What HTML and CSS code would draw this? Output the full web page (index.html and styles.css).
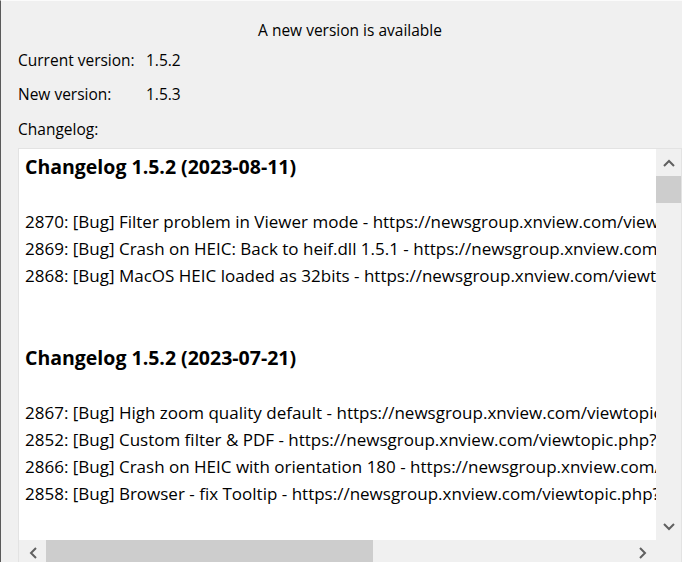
FILE: index.html
```html
<!DOCTYPE html>
<html>
<head>
<meta charset="utf-8">
<link rel="stylesheet" href="styles.css">
</head>
<body>
<div class="frame">
  <div class="dialog">
    <div class="title">A new version is available</div>
    <div class="row row1"><span class="label">Current version:</span><span class="value">1.5.2</span></div>
    <div class="row row2"><span class="label">New version:</span><span class="value">1.5.3</span></div>
    <div class="row row3"><span class="label">Changelog:</span></div>
    <div class="box">
      <div class="viewport">
        <div class="content">
          <div class="heading">Changelog 1.5.2 (2023-08-11)</div>
          <div class="line"></div>
          <div class="line">2870: [Bug] Filter problem in Viewer mode - https://newsgroup.xnview.com/viewtopic.php?t=47012</div>
          <div class="line">2869: [Bug] Crash on HEIC: Back to heif.dll 1.5.1 - https://newsgroup.xnview.com/viewtopic.php?t=47010</div>
          <div class="line">2868: [Bug] MacOS HEIC loaded as 32bits - https://newsgroup.xnview.com/viewtopic.php?t=46999</div>
          <div class="line"></div>
          <div class="line"></div>
          <div class="heading">Changelog 1.5.2 (2023-07-21)</div>
          <div class="line"></div>
          <div class="line">2867: [Bug] High zoom quality default - https://newsgroup.xnview.com/viewtopic.php?t=46962</div>
          <div class="line">2852: [Bug] Custom filter &amp; PDF - https://newsgroup.xnview.com/viewtopic.php?t=46880</div>
          <div class="line">2866: [Bug] Crash on HEIC with orientation 180 - https://newsgroup.xnview.com/viewtopic.php?t=46955</div>
          <div class="line">2858: [Bug] Browser - fix Tooltip - https://newsgroup.xnview.com/viewtopic.php?t=46921</div>
        </div>
      </div>
      <div class="vscroll">
        <div class="sbtn vbtn-up">
          <svg width="12" height="8" viewBox="0 0 12 8"><polyline points="1,7 6,2 11,7" fill="none" stroke="#606060" stroke-width="2"/></svg>
        </div>
        <div class="vtrack"><div class="vthumb"></div></div>
        <div class="sbtn vbtn-down">
          <svg width="12" height="8" viewBox="0 0 12 8"><polyline points="1,1 6,6 11,1" fill="none" stroke="#606060" stroke-width="2"/></svg>
        </div>
      </div>
      <div class="hscroll">
        <div class="sbtn hbtn">
          <svg width="8" height="12" viewBox="0 0 8 12"><polyline points="7,1 2,6 7,11" fill="none" stroke="#606060" stroke-width="2"/></svg>
        </div>
        <div class="htrack"><div class="hthumb"></div></div>
        <div class="sbtn hbtn">
          <svg width="8" height="12" viewBox="0 0 8 12"><polyline points="1,1 6,6 1,11" fill="none" stroke="#606060" stroke-width="2"/></svg>
        </div>
      </div>
      <div class="corner"></div>
    </div>
  </div>
</div>
</body>
</html>
```
FILE: styles.css
```css
html, body {
  margin: 0;
  padding: 0;
  width: 682px;
  height: 562px;
  overflow: hidden;
  background: #f0f0f0;
}
.frame {
  width: 700px;
  height: 562px;
  border-left: 1px solid #5a5a5a;
  border-top: 1px solid #fbfbfb;
  box-sizing: border-box;
  background: #f0f0f0;
  font-family: "Open Sans", "Noto Sans", sans-serif;
  font-size: 15.5px;
  color: #000;
}
.dialog {
  display: flex;
  flex-direction: column;
  padding: 19px 18px 0 17px;
}
.title {
  line-height: 20px;
  height: 20px;
  text-align: center;
}
.row {
  display: flex;
  line-height: 20px;
  height: 20px;
}
.row1 { margin-top: 10px; }
.row2 { margin-top: 14px; }
.row3 { margin-top: 15px; }
.label { width: 128px; }
.box {
  margin-top: 9px;
  height: 418px;
  box-sizing: border-box;
  border: 1px solid #e3e3e3;
  display: grid;
  grid-template-columns: 1fr 25px;
  grid-template-rows: 1fr 25px;
  background: #fff;
}
.viewport {
  overflow: hidden;
  background: #fff;
}
.content {
  padding: 3px 0 0 6px;
  white-space: nowrap;
}
.heading {
  font-weight: bold;
  font-size: 19.5px;
  line-height: 29px;
  height: 29px;
}
.line {
  font-size: 17px;
  line-height: 27px;
  height: 27px;
}
.vscroll {
  display: flex;
  flex-direction: column;
  background: #f0f0f0;
}
.sbtn {
  display: flex;
  align-items: center;
  justify-content: center;
  flex: none;
}
.vbtn-up { height: 27px; }
.vbtn-down { height: 26px; }
.vtrack { flex: 1; }
.vthumb {
  height: 27px;
  background: #cdcdcd;
}
.hscroll {
  display: flex;
  background: #f0f0f0;
}
.hbtn { width: 27px; }
.hscroll .hbtn:last-child { width: 26px; }
.htrack { flex: 1; }
.hthumb {
  width: 327px;
  height: 100%;
  background: #cdcdcd;
}
.corner { background: #f0f0f0; }
```
